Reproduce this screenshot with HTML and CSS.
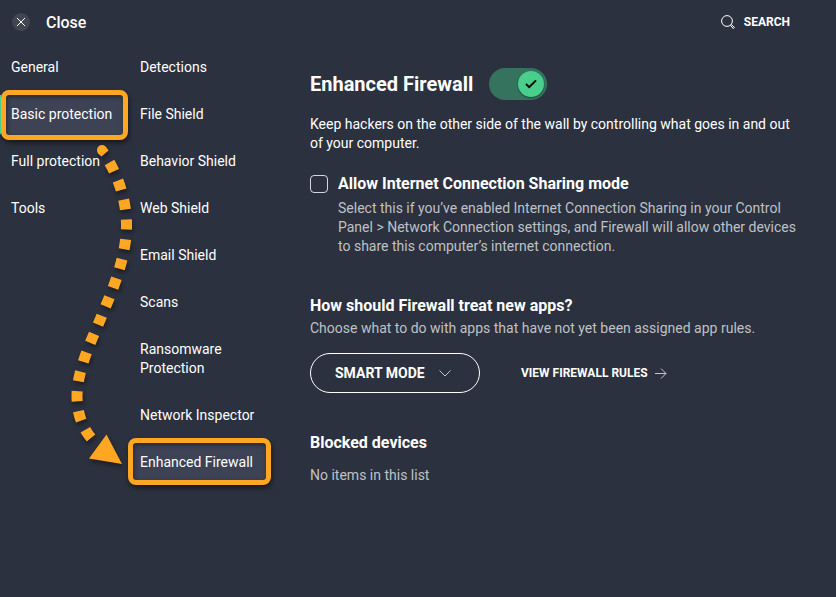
FILE: index.html
```
<!DOCTYPE html>
<html lang="en">

<head>
    <meta charset="UTF-8">
    <meta name="viewport" content="width=device-width, initial-scale=1.0">
    <title>Enhanced Firewall</title>
    <link rel="stylesheet" href="styles.css">
</head>

<body>
    <header class="topbar">
        <button type="button" class="close-btn">
            <span class="close-icon">
                <svg width="10" height="10" viewBox="0 0 10 10" aria-hidden="true">
                    <path d="M1 1l8 8M9 1l-8 8" />
                </svg>
            </span>
            Close
        </button>
        <button type="button" class="search-btn">
            <svg width="14" height="14" viewBox="0 0 14 14" aria-hidden="true">
                <circle cx="6" cy="6" r="5.4" />
                <path d="M9.6 10.4l.8-.8 3 2.8-1.2 1.2z" />
            </svg>
            SEARCH
        </button>
    </header>

    <div class="layout">
        <nav class="menu main-menu" aria-label="Categories">
            <a href="#">General</a>
            <a href="#" class="active highlight">Basic protection</a>
            <a href="#">Full protection</a>
            <a href="#">Tools</a>
        </nav>

        <nav class="menu sub-menu" aria-label="Basic protection">
            <a href="#">Detections</a>
            <a href="#">File Shield</a>
            <a href="#">Behavior Shield</a>
            <a href="#">Web Shield</a>
            <a href="#">Email Shield</a>
            <a href="#">Scans</a>
            <a href="#">Ransomware Protection</a>
            <a href="#">Network Inspector</a>
            <a href="#" class="highlight">Enhanced Firewall</a>
        </nav>

        <main>
            <div class="title-row">
                <h1 id="title">Enhanced Firewall</h1>
                <label class="toggle">
                    <input type="checkbox" aria-labelledby="title" checked>
                    <span class="knob">
                        <svg width="12" height="10" viewBox="0 0 12 10" aria-hidden="true">
                            <path d="M1 5l3.2 3.2L11 1.4" />
                        </svg>
                    </span>
                </label>
            </div>
            <p class="intro">Keep hackers on the other side of the wall by controlling what goes in and out of your computer.</p>

            <div class="option">
                <input type="checkbox" id="sharing">
                <div>
                    <label for="sharing">Allow Internet Connection Sharing mode</label>
                    <p>Select this if you’ve enabled Internet Connection Sharing in your Control Panel &gt; Network Connection settings, and Firewall will allow other devices to share this computer’s internet connection.</p>
                </div>
            </div>

            <section class="apps">
                <h2>How should Firewall treat new apps?</h2>
                <p>Choose what to do with apps that have not yet been assigned app rules.</p>
                <div class="actions">
                    <button type="button" class="mode-btn">
                        SMART MODE
                        <svg width="12" height="7" viewBox="0 0 12 7" aria-hidden="true">
                            <path d="M.5.5L6 6l5.500-5.500" />
                        </svg>
                    </button>
                    <a href="#" class="rules-link">
                        VIEW FIREWALL RULES
                        <svg width="12" height="11" viewBox="0 0 12 11" aria-hidden="true">
                            <path d="M0 5.500h11M6 .5l5 5-5 5" />
                        </svg>
                    </a>
                </div>
            </section>

            <section class="devices">
                <h2>Blocked devices</h2>
                <p>No items in this list</p>
            </section>
        </main>

        <!-- dotted pointer from Basic protection to Enhanced Firewall -->
        <svg class="pointer" width="140" height="480" viewBox="0 0 140 480" aria-hidden="true">
            <path class="head" d="M98 153.500C95.500 149.500 98 145 102 145C104.500 145 106 146.500 108.500 150.500L101.500 156.500z" />
            <path class="dots" pathLength="290" d="M109.500 162.500C119 179 126.500 202 126.500 225C126.500 262 108 300 100 320C92 339 77 370 77 396C77 413 82 427 91 438" />
            <path class="head" d="M106.500 434.500L122 464L89 458.500z" />
        </svg>
    </div>
</body>

</html>
```
FILE: styles.css
```
* {
    box-sizing: border-box;
}

body {
    margin: 0;
    min-height: 100vh;
    background-color: #2b313e;
    color: #fff;
    font-family: Roboto, "Liberation Sans", sans-serif;
    font-size: 14px;
    line-height: 19px;
}

h1,
h2,
p {
    margin: 0;
}

a {
    color: inherit;
    text-decoration: none;
}

button {
    padding: 0;
    border: 0;
    background: none;
    color: inherit;
    font: inherit;
    cursor: pointer;
}

svg {
    fill: none;
    stroke: #fff;
}


.topbar {
    display: flex;
    justify-content: space-between;
    align-items: center;
    height: 44px;
    padding: 0 46px 0 12px;
}

.close-btn,
.search-btn {
    display: flex;
    align-items: center;
}

.close-btn {
    gap: 16px;
    font-size: 16px;
    font-weight: 500;
}

.close-icon {
    display: flex;
    justify-content: center;
    align-items: center;
    width: 18px;
    height: 18px;
    border-radius: 50%;
    background-color: #414652;
}

.search-btn {
    gap: 9px;
    font-size: 12px;
    font-weight: 700;
}


.layout {
    display: flex;
}

.menu {
    display: flex;
    flex-direction: column;
    flex: none;
}

.main-menu {
    width: 129px;
}

.sub-menu {
    width: 141px;
}

.menu a {
    position: relative;
    padding: 14px 11px;
}

.menu .active::after {
    content: "";
    position: absolute;
    inset: 4px auto 4px 0;
    width: 1px;
    background-color: #47cf8b;
}

.menu .highlight::before {
    content: "";
    position: absolute;
    inset: -1px 1px -2px 1px;
    z-index: -1;
    border: 5px solid #ffa723;
    border-radius: 8px;
    background-color: #3d4254;
    box-shadow: 1px 3px 5px rgba(0, 0, 0, 0.5), inset 1px 2px 4px rgba(0, 0, 0, 0.4);
}

.sub-menu .highlight::before {
    inset: -1px -1px 1px -1px;
}


main {
    flex: 1;
    padding: 24px 36px 24px 40px;
}

.title-row {
    display: flex;
    align-items: center;
    gap: 16px;
}

h1 {
    font-size: 20px;
    font-weight: 700;
    line-height: 24px;
}

h2,
.option label {
    font-size: 16px;
    font-weight: 700;
    line-height: 20px;
}

main p {
    color: #bfc1c5;
}

main .intro {
    margin-top: 15px;
    color: #fff;
}

.toggle {
    display: flex;
    justify-content: flex-end;
    width: 58px;
    height: 32px;
    padding: 3px;
    border-radius: 16px;
    background-color: #36735f;
    cursor: pointer;
}

.toggle input {
    position: absolute;
    opacity: 0;
}

.knob {
    display: flex;
    justify-content: center;
    align-items: center;
    width: 26px;
    height: 26px;
    border-radius: 50%;
    background-color: #47cf8b;
    box-shadow: 0 1px 2px rgba(0, 0, 0, 0.4);
}

.knob path {
    stroke: #000;
    stroke-width: 2;
}

.option {
    display: flex;
    gap: 10px;
    margin-top: 21px;
}

.option input {
    appearance: none;
    flex: none;
    width: 18px;
    height: 18px;
    margin: 1px 0 0;
    border: 1px solid #d5d6d8;
    border-radius: 4px;
}

.option p {
    margin-top: 5px;
}

.option label {
    display: block;
}

.apps {
    margin-top: 40px;
}

.apps p {
    margin-top: 3px;
}

.actions {
    display: flex;
    align-items: center;
    gap: 41px;
    margin-top: 15px;
}

.mode-btn {
    display: flex;
    align-items: center;
    gap: 14px;
    width: 170px;
    height: 40px;
    padding: 0 24px;
    border: 1px solid #fff;
    border-radius: 20px;
    font-weight: 700;
}

.mode-btn path,
.rules-link path {
    stroke: #c5c7cb;
}

.rules-link {
    display: flex;
    align-items: center;
    gap: 7px;
    font-size: 12px;
    font-weight: 700;
}

.devices {
    margin-top: 40px;
}

.devices p {
    margin-top: 13px;
}


.pointer {
    position: absolute;
    top: 0;
    left: 0;
    pointer-events: none;
    filter: drop-shadow(1px 3px 2px rgba(0, 0, 0, 0.4));
}

.pointer .head {
    fill: #ffa723;
    stroke: none;
}

.pointer .dots {
    stroke: #ffa723;
    stroke-width: 11;
    stroke-dasharray: 10 10;
}
```
